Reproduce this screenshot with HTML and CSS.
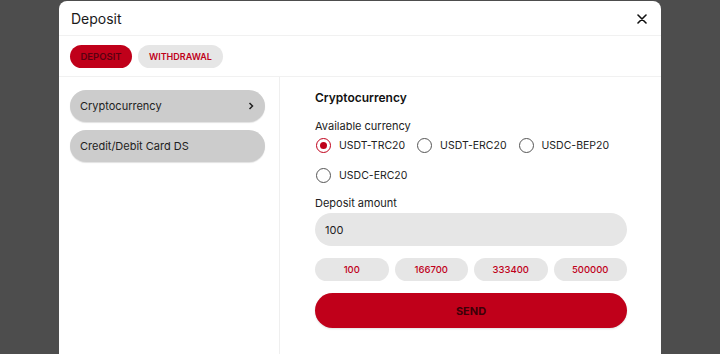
FILE: index.html
```html
<!DOCTYPE html>
<html>
<head>
<meta charset="utf-8">
<link rel="stylesheet" href="styles.css">
</head>
<body>
<div class="modal">
  <div class="modal-header">
    <span class="modal-title">Deposit</span>
    <button class="close" aria-label="Close">
      <svg width="10" height="10" viewBox="0 0 10 10"><path d="M1 1L9 9M9 1L1 9" stroke="#111" stroke-width="1.6" stroke-linecap="round"/></svg>
    </button>
  </div>
  <div class="tabs">
    <button class="tab active">DEPOSIT</button>
    <button class="tab">WITHDRAWAL</button>
  </div>
  <div class="content">
    <div class="side">
      <div class="method">
        <span>Cryptocurrency</span>
        <svg width="6" height="8" viewBox="0 0 6 8"><path d="M1.5 1L4.5 4L1.5 7" fill="none" stroke="#222" stroke-width="1.5"/></svg>
      </div>
      <div class="method"><span>Credit/Debit Card DS</span></div>
    </div>
    <div class="main">
      <h2 class="heading">Cryptocurrency</h2>
      <div class="label">Available currency</div>
      <div class="radios">
        <label class="radio checked"><span class="dot"></span>USDT-TRC20</label>
        <label class="radio"><span class="dot"></span>USDT-ERC20</label>
        <label class="radio"><span class="dot"></span>USDC-BEP20</label>
        <label class="radio"><span class="dot"></span>USDC-ERC20</label>
      </div>
      <div class="label amount-label">Deposit amount</div>
      <div class="input">100</div>
      <div class="presets">
        <button class="preset">100</button>
        <button class="preset">166700</button>
        <button class="preset">333400</button>
        <button class="preset">500000</button>
      </div>
      <button class="send">SEND</button>
    </div>
  </div>
</div>
</body>
</html>
```

FILE: styles.css
```css
* { box-sizing: border-box; }
html, body { margin: 0; padding: 0; }
body {
  background: #4d4d4d;
  font-family: Inter, "Noto Sans", sans-serif;
  color: #1a1a1a;
  height: 354px;
  overflow: hidden;
}
button { font-family: inherit; border: none; cursor: pointer; padding: 0; }
.modal {
  margin: 1px 0 0 59px;
  width: 602px;
  height: 400px;
  background: #fff;
  border-radius: 8px 8px 0 0;
  display: flex;
  flex-direction: column;
}
.modal-header {
  height: 35px;
  display: flex;
  align-items: center;
  justify-content: space-between;
  padding: 0 13px 0 12px;
  border-bottom: 1px solid #f1f1f1;
}
.modal-title { font-size: 14px; color: #1a1a1a; }
.close { background: none; width: 12px; height: 12px; display: flex; align-items: center; justify-content: center; margin-top: 1px; }
.tabs {
  height: 41px;
  display: flex;
  gap: 6px;
  padding: 9px 11px 0;
  border-bottom: 1px solid #f1f1f1;
}
.tab {
  height: 23px;
  border-radius: 12px;
  background: #e6e6e6;
  color: #c0001a;
  font-size: 9px;
  font-weight: 600;
  padding: 0 11px;
}
.tab.active { background: #c0001a; color: #5a0010; width: 62px; padding: 0; font-size: 9.5px; }
.content { display: flex; flex: 1; }
.side {
  width: 221px;
  border-right: 1px solid #efefef;
  padding: 13px 14px 0 11px;
  display: flex;
  flex-direction: column;
  gap: 8px;
}
.method {
  height: 32px;
  border-radius: 16px;
  background: #cccccc;
  box-shadow: 0 1px 1px rgba(0,0,0,0.12);
  display: flex;
  align-items: center;
  justify-content: space-between;
  padding: 0 11px 0 10px;
  font-size: 11px;
  color: #222;
}
.main {
  flex: 1;
  padding: 13px 34px 0 35px;
  display: flex;
  flex-direction: column;
}
.heading { margin: 0; font-size: 12px; font-weight: 600; line-height: 16px; color: #111; }
.label { font-size: 11px; line-height: 14px; margin-top: 13px; color: #222; }
.radios {
  display: flex;
  flex-wrap: wrap;
  column-gap: 11px;
  margin-top: 0;
  width: 310px;
}
.radio {
  display: flex;
  align-items: center;
  height: 30px;
  gap: 8px;
  font-size: 10.5px;
  color: #222;
  padding-bottom: 6px;
  padding-left: 1px;
}
.dot {
  width: 15px;
  height: 15px;
  border: 1px solid #555;
  border-radius: 50%;
  display: flex;
  align-items: center;
  justify-content: center;
}
.radio.checked .dot { border-color: #c0001a; }
.radio.checked .dot::after {
  content: "";
  width: 7px;
  height: 7px;
  border-radius: 50%;
  background: #c0001a;
}
.amount-label { margin-top: 3px; }
.input {
  margin-top: 3px;
  height: 33px;
  border-radius: 17px;
  background: #e6e6e6;
  display: flex;
  align-items: center;
  padding-left: 10px;
  font-size: 11px;
  color: #222;
}
.presets {
  display: grid;
  grid-template-columns: repeat(4, 1fr);
  gap: 6px;
  margin-top: 12px;
}
.preset {
  height: 23px;
  border-radius: 12px;
  background: #e6e6e6;
  color: #c0001a;
  font-size: 9.5px;
  font-weight: 500;
}
.send {
  margin-top: 12px;
  height: 35px;
  border-radius: 18px;
  background: #c0001a;
  color: #3d0008;
  font-size: 11px;
  font-weight: 700;
  box-shadow: 0 1px 2px rgba(0,0,0,0.12);
}
```
